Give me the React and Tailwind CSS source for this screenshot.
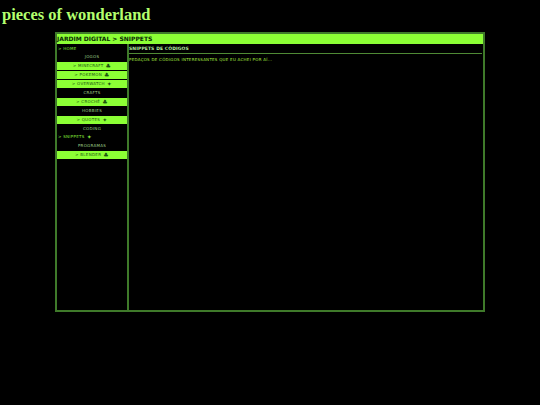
const rows = [
  { t: "> HOME", k: "left" },
  { t: "JOGOS", k: "head" },
  { t: "> MINECRAFT", g: "♣", k: "bar" },
  { t: "> POKEMON", g: "♣", k: "bar" },
  { t: "> OVERWATCH", g: "✦", k: "bar" },
  { t: "CRAFTS", k: "head" },
  { t: "> CROCHÊ", g: "♣", k: "bar" },
  { t: "HOBBIES", k: "head" },
  { t: "> QUOTES", g: "✦", k: "bar" },
  { t: "CODING", k: "head" },
  { t: "> SNIPPETS", g: "✦", k: "left" },
  { t: "PROGRAMAS", k: "head" },
  { t: "> BLENDER", g: "♣", k: "bar" },
];

function Row({ r }) {
  const base = "h-[8px] mb-[0.9px] flex items-center whitespace-nowrap";
  if (r.k === "bar")
    return (
      <div className={base + " justify-center bg-[#8cff35] text-[#1c5410] gap-[2px]"}>
        <span>{r.t}</span>
        <span className="text-[6px] leading-none">{r.g}</span>
      </div>
    );
  if (r.k === "head")
    return <div className={base + " justify-center text-[#9fd088]"}>{r.t}</div>;
  return (
    <div className={base + " pl-[1px] gap-[2px] text-[#86e83a]"}>
      <span>{r.t}</span>
      {r.g && <span className="text-[6px] leading-none">{r.g}</span>}
    </div>
  );
}

export default function App() {
  return (
    <div className="w-[540px] h-[405px] bg-black overflow-hidden font-['DejaVu_Sans',sans-serif]">
      <h1 className="h-[32px] pl-[2px] pt-[4px] text-[16.5px] leading-[22px] font-bold text-[#b4ff6e] font-['Liberation_Serif',serif]">
        pieces of wonderland
      </h1>
      <div className="ml-[55px] w-[430px] h-[280px] border-2 border-[#3f7a2a] flex flex-col">
        <div className="h-[10px] bg-[#8cff35] text-[#0a2a05] text-[6px] leading-[10px] font-bold whitespace-nowrap">
          JARDIM DIGITAL &gt; SNIPPETS
        </div>
        <div className="flex flex-1">
          <nav className="w-[72px] border-r-2 border-[#3f7a2a] text-[4px] tracking-[0.3px] pt-[0.5px]">
            {rows.map((r) => (
              <Row key={r.t} r={r} />
            ))}
          </nav>
          <main className="flex-1 pr-[1px] text-[4px] tracking-[0.26px] text-[#a8ec40]">
            <div className="h-[10px] border-b border-[#4f8a35] text-[4.5px] leading-[9px] tracking-[0.1px] text-[#b8e8a0] font-bold">
              SNIPPETS DE CÓDIGOS
            </div>
            <p className="mt-[2px] leading-[7px] whitespace-nowrap">
              PEDAÇOS DE CÓDIGOS INTERESSANTES QUE EU ACHEI POR AÍ...
            </p>
          </main>
        </div>
      </div>
    </div>
  );
}
